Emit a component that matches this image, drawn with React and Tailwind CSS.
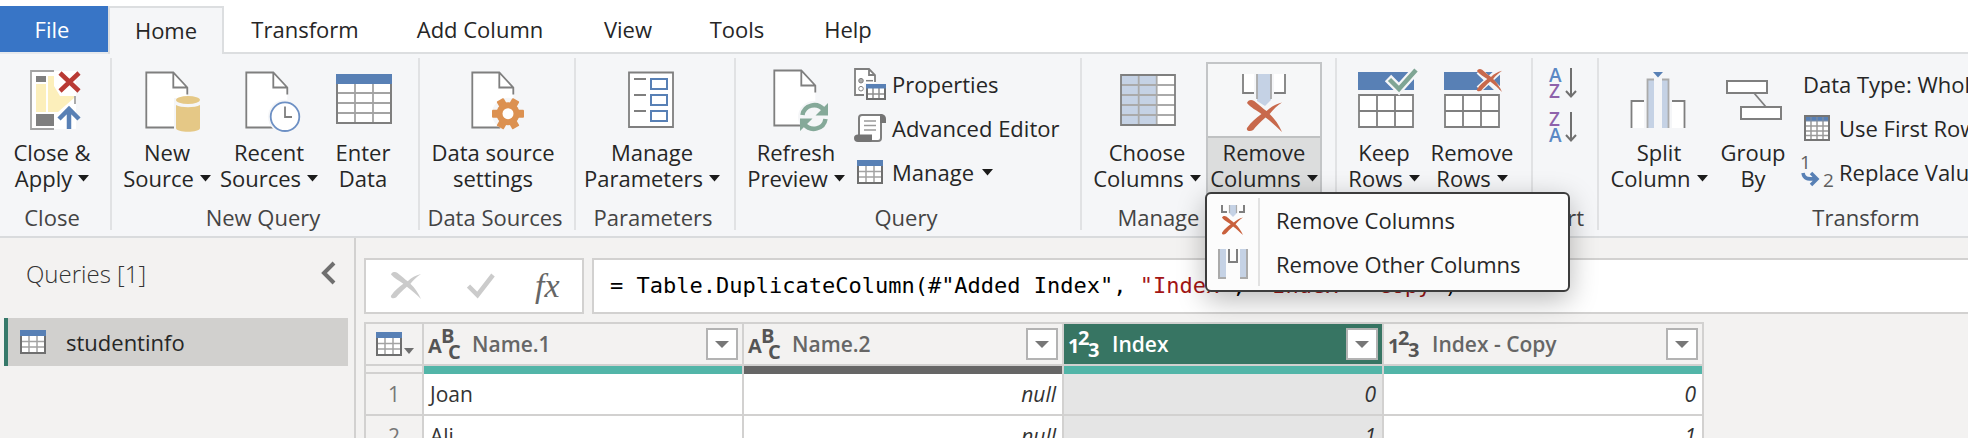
import React from "react";

const GRAY = "#7f7f7f";
const BLUE = "#5880b5";
const RED = "#c8694c";

function Caret() {
  return (
    <svg width="11" height="7" viewBox="0 0 11 7" className="inline-block shrink-0" aria-hidden="true">
      <path d="M0 0h11L5.500 6.500z" fill="#1b1b1b" />
    </svg>
  );
}

function BigIcon({ children }) {
  return (
    <svg width="68" height="66" viewBox="0 0 68 66" className="block overflow-visible" fill="none" aria-hidden="true">
      {children}
    </svg>
  );
}

function Brush({ x, y, w, h, color = RED }) {
  return (
    <svg x={x} y={y} width={w} height={h} viewBox="0 0 34 32" preserveAspectRatio="none" overflow="visible">
      <path
        d="M0 3C1 0 4-1 7 1C12 5 16 9 19 11C23 7 28 4 34 2.500C29 6 25 10 22 14C27 19 31 25 34 32C29 27 24 22 18 17.500C13 22 9 26 6 30C3 32-1 31 0 28C4 22 9 18 14 14C9 10 4 8 0 3Z"
        fill={color}
      />
    </svg>
  );
}

function Doc({ x, y }) {
  return (
    <g transform={`translate(${x} ${y})`} stroke={GRAY} strokeWidth="1.8">
      <path d="M0 0H27L41 15V55H0Z" fill="#fff" stroke="none" />
      <path d="M28 55H0V0H27L41 15V22M27 0V15H41" />
    </g>
  );
}

function CloseApplyIcon() {
  return (
    <BigIcon>
      <path d="M13 3H58V61H13Z" fill="#fff" />
      <path d="M36 3H13V61H36M57 28V36" stroke="#a3a3a3" strokeWidth="1.8" />
      <path d="M18 8H28V14H18ZM18 46H36V58H18Z" fill={GRAY} />
      <path d="M18 16H28V44H18ZM30 8H36V18L42 28H56V30L40 44H30Z" fill="#fcefbb" />
      <path d="M42 5L61 23M61 5L42 23" stroke="#b93a34" strokeWidth="4.500" />
      <path d="M51 61V40M41 51L51 41L61 51" stroke={BLUE} strokeWidth="4.500" />
    </BigIcon>
  );
}

function NewSourceIcon() {
  return (
    <BigIcon>
      <Doc x={13.3} y={4.5} />
      <path d="M41 30H69V66H41Z" fill="#f5f6f8" />
      <path d="M43 37V60C43 65 67 65 67 60V37C62 40 48 40 43 37Z" fill="#e5c886" />
      <ellipse cx="55" cy="32" rx="12" ry="4" fill="#e5c886" />
    </BigIcon>
  );
}

function RecentIcon() {
  return (
    <BigIcon>
      <Doc x={11.3} y={4.5} />
      <circle cx="50" cy="48.700" r="17" fill="#f5f6f8" />
      <circle cx="50" cy="48.700" r="14.300" fill="#fff" stroke="#6d90c4" strokeWidth="1.800" />
      <path d="M50 38.500V49H57" stroke={GRAY} strokeWidth="1.800" />
    </BigIcon>
  );
}

function EnterDataIcon() {
  return (
    <BigIcon>
      <path d="M8 7H62V55H8Z" fill="#fff" />
      <path d="M8 25H62M8 35H62M8 45H62M26 16V55M44 16V55" stroke="#a3a3a3" strokeWidth="1.800" />
      <path d="M8 7H62V55H8Z" stroke={GRAY} strokeWidth="2" />
      <path d="M7 6H63V16H7Z" fill={BLUE} />
    </BigIcon>
  );
}

function SettingsIcon() {
  return (
    <BigIcon>
      <Doc x={13.3} y={4.5} />
      <circle cx="49" cy="45.700" r="16" fill="#f5f6f8" />
      <g transform="translate(49 45.700)" fill="#dc9151">
        <rect x="-16" y="-4" width="32" height="8" rx="1" />
        <rect x="-16" y="-4" width="32" height="8" rx="1" transform="rotate(60)" />
        <rect x="-16" y="-4" width="32" height="8" rx="1" transform="rotate(120)" />
        <circle r="11.500" />
        <circle r="5.500" fill="#fff" />
      </g>
    </BigIcon>
  );
}

function ParametersIcon() {
  return (
    <BigIcon>
      <path d="M11 4.500H55V59H11Z" fill="#fff" stroke={GRAY} strokeWidth="1.800" />
      <path d="M16 11H28M16 27H28M16 43H28" stroke={GRAY} strokeWidth="1.800" />
      <path d="M33 11H49V21H33ZM33 27H49V37H33ZM33 43H49V53H33Z" stroke={BLUE} strokeWidth="2" />
    </BigIcon>
  );
}

function RefreshIcon() {
  return (
    <BigIcon>
      <Doc x={12.3} y={2.5} />
      <circle cx="52" cy="49" r="16" fill="#f5f6f8" />
      <g stroke="#85a999" strokeWidth="4.500">
        <path d="M40.500 47C42 37 55 33.500 62 42" />
        <path d="M63.500 51C62 61 49 64.500 42 56" />
      </g>
      <path d="M66 35V47.500H53.500ZM38 63V50.500H50.500Z" fill="#85a999" />
    </BigIcon>
  );
}

function ChooseColumnsIcon() {
  return (
    <BigIcon>
      <path d="M8 7H62V57H8Z" fill="#fff" />
      <path d="M8 7H43.700V57H8Z" fill="#c5d2e5" />
      <path d="M8 17H62M8 27H62M8 37H62M8 47H62M25.700 7V57M43.700 7V57" stroke="#aaa" strokeWidth="1.800" />
      <path d="M8 7H62V57H8Z" stroke={GRAY} strokeWidth="1.800" />
    </BigIcon>
  );
}

function RemoveColumnsIcon() {
  return (
    <BigIcon>
      <path d="M13 6H55V25H13Z" fill="#fff" />
      <path d="M24 6H44V30H24Z" fill="#f5f6f8" />
      <path d="M13 6V25H24M55 6V25H44" stroke={GRAY} strokeWidth="1.800" />
      <path d="M27 6H41V32L35 38L27 33Z" fill="#c5d2e5" />
      <path d="M27 6V31M41 6V31" stroke="#aaa" strokeWidth="1.800" />
      <Brush x={17} y={32} w={35} h={32} />
    </BigIcon>
  );
}

function RowsGrid({ x }) {
  return (
    <g transform={`translate(${x} 0)`}>
      <path d="M1 27H55V59H1Z" fill="#fff" />
      <path d="M1 27H55V59H1ZM1 43H55M19 27V59M37 27V59" stroke={GRAY} strokeWidth="1.800" />
      <path d="M0 4H56V22H0Z" fill={BLUE} />
    </g>
  );
}

function KeepRowsIcon() {
  return (
    <BigIcon>
      <RowsGrid x={8} />
      <path d="M38 10L49 21L67 1" stroke="#f5f6f8" strokeWidth="9" />
      <path d="M39.500 11.500L49 21L66 2" stroke="#7fa594" strokeWidth="4.500" />
    </BigIcon>
  );
}

function RemoveRowsIcon() {
  return (
    <BigIcon>
      <RowsGrid x={6} />
      <path d="M41 3L61 22M62 2L41 21" stroke="#f5f6f8" strokeWidth="7" />
      <Brush x={39} y={1} w={25} h={23} />
    </BigIcon>
  );
}

function SplitIcon() {
  return (
    <BigIcon>
      <path d="M7 33H19V60H7ZM47 33H60V60H47Z" fill="#fff" />
      <path d="M6.500 60V33H19M59.500 60V33H47" stroke={GRAY} strokeWidth="1.800" />
      <path d="M22 11H29V60H22ZM37 11H44V60H37Z" fill="#c5d2e5" />
      <path d="M22.500 60V11.500H29M43.500 60V11.500H37" stroke="#aaa" strokeWidth="1.800" />
      <path d="M28 4H38L33 9.500Z" fill={BLUE} />
    </BigIcon>
  );
}

function GroupIcon() {
  return (
    <BigIcon>
      <path d="M35 25L47 39" stroke={GRAY} strokeWidth="1.800" />
      <path d="M8 13H48V25H8ZM22 39H62V51H22Z" fill="#fff" stroke={GRAY} strokeWidth="2" />
    </BigIcon>
  );
}

function TableIcon() {
  return (
    <svg width="26" height="24" viewBox="0 0 26 24" fill="none" className="block shrink-0" aria-hidden="true">
      <path d="M1 1H25V23H1Z" fill="#fff" />
      <path d="M1 11.500H25M1 17H25M9 5V23M17 5V23" stroke="#a3a3a3" strokeWidth="1.500" />
      <path d="M1 1H25V23H1Z" stroke="#6f6f6f" strokeWidth="2" />
      <path d="M0 0H26V6H0Z" fill={BLUE} />
    </svg>
  );
}

function PropertiesIcon() {
  return (
    <svg width="36" height="36" viewBox="0 0 36 36" fill="none" aria-hidden="true">
      <path d="M3 3H18L24 9V29H3Z" fill="#fff" />
      <path d="M12 29H3V3H17L23 9V16M17 3V9H23" stroke={GRAY} strokeWidth="1.800" />
      <circle cx="9" cy="14.700" r="2.300" fill="#aaa" stroke={GRAY} />
      <circle cx="9" cy="22.700" r="2.300" stroke={GRAY} />
      <path d="M14 14.700H21" stroke={GRAY} strokeWidth="1.500" />
      <path d="M12 17H34V34H12Z" fill="#f5f6f8" />
      <path d="M14 18H34V34H14Z" fill="#fff" />
      <path d="M15 28H33M21 22V33M27 22V33" stroke="#8f8f8f" strokeWidth="1.500" />
      <path d="M15 19H33V33H15Z" stroke="#6f6f6f" strokeWidth="2" />
      <path d="M14 18H34V22.500H14Z" fill={BLUE} />
    </svg>
  );
}

function EditorIcon() {
  return (
    <svg width="36" height="36" viewBox="0 0 36 36" fill="none" aria-hidden="true">
      <path d="M7 5H28V31H7Z" fill="#fff" />
      <path d="M7 25V8Q7 5 10 5H30M29 8V28Q29 31 26 31H18" stroke={GRAY} strokeWidth="2" />
      <path d="M28 4H30Q34 5 34 9V13H28ZM2 28Q2 24.500 6 24.500H20V31L18 32H6Q2 32 2 28Z" fill="#747474" />
      <path d="M12 11H24M12 15.500H24M12 20H24" stroke="#9a9a9a" strokeWidth="1.600" />
    </svg>
  );
}

function HeaderRowIcon() {
  return (
    <svg width="26" height="26" viewBox="0 0 26 26" fill="none" aria-hidden="true">
      <path d="M1 1H25V25H1Z" fill="#fff" />
      <path d="M1 1H25V6H1Z" fill={BLUE} />
      <path d="M1 11H25M1 16H25M1 20.500H25M7 6V25M13 6V25M19 6V25" stroke="#9a9a9a" strokeWidth="1.500" />
      <path d="M7 1V6M13 1V6M19 1V6M1 6H25" stroke="#7f8da3" strokeWidth="1.200" />
      <path d="M1 1H25V25H1Z" stroke="#757575" strokeWidth="2" />
    </svg>
  );
}

function ReplaceIcon() {
  return (
    <svg width="34" height="36" viewBox="0 0 34 36" fill="none" className="overflow-visible font-['Open_Sans']" aria-hidden="true">
      <text x="0" y="15" fontSize="19" fill="#5f5f5f">1</text>
      <text x="23" y="33" fontSize="19" fill="#5f5f5f">2</text>
      <path d="M3 19C4 25 7 25 16 25M11 19L17 25L11 31" stroke={BLUE} strokeWidth="3.500" />
    </svg>
  );
}

function SortIcon({ first, second, firstColor, secondColor }) {
  return (
    <svg width="28" height="32" viewBox="0 0 28 32" fill="none" className="block overflow-visible font-['Open_Sans'] font-semibold" aria-hidden="true">
      <text x="0" y="14" fontSize="19" fill={firstColor}>{first}</text>
      <text x="0" y="30" fontSize="19" fill={secondColor}>{second}</text>
      <path d="M22 0V28M17 23L22 28.500L27 23" stroke="#707070" strokeWidth="2" />
    </svg>
  );
}

function MenuRemoveIcon() {
  return (
    <svg width="32" height="32" viewBox="0 0 32 32" fill="none" aria-hidden="true">
      <path d="M5 1V8H10M27 1V8H22" stroke={GRAY} strokeWidth="2" />
      <path d="M12 1H20V9L16 13L12 9Z" fill="#c5d2e5" />
      <path d="M12.500 1V9M19.500 1V9" stroke="#aaa" strokeWidth="1.200" />
      <Brush x={5} y={12} w={21} h={19} color="#c9603c" />
    </svg>
  );
}

function MenuOtherIcon() {
  return (
    <svg width="32" height="32" viewBox="0 0 32 32" fill="none" aria-hidden="true">
      <path d="M1 1H9V31H1ZM23 1H31V31H23Z" fill="#c5d2e5" />
      <path d="M2 1V30H9M30 1V30H23" stroke="#aaa" strokeWidth="2" />
      <path d="M12 1V14H20V1" stroke={GRAY} strokeWidth="2" />
    </svg>
  );
}

function TypeIcon({ kind, light }) {
  const fill = light ? "#ffffff" : "#555555";
  const glyphs = kind === "text" ? ["A", "B", "C"] : ["1", "2", "3"];
  const spots = kind === "text" ? [[0, 27], [13, 17], [20, 33]] : [[0, 27], [10, 19], [20, 31]];
  return (
    <svg width="36" height="36" viewBox="0 0 36 36" className="block shrink-0 overflow-visible font-['Open_Sans'] font-bold" aria-hidden="true">
      {glyphs.map((g, i) => (
        <text key={g} x={spots[i][0]} y={spots[i][1]} fontSize="20" fill={fill}>{g}</text>
      ))}
    </svg>
  );
}

function Group({ label, className, children }) {
  return (
    <section className={`flex shrink-0 border-r-2 border-[#e1e2e4] ${className}`}>
      <div className="flex grow flex-col">
        <div className="flex h-[146px] items-start">{children}</div>
        <h2 className="text-center leading-[26px] text-[#444]">{label}</h2>
      </div>
    </section>
  );
}

function BigButton({ icon, top, bottom, caret, className }) {
  return (
    <button type="button" className={`flex shrink-0 flex-col items-center pt-[10px] ${className}`}>
      {icon}
      <span className="mt-[5px] whitespace-nowrap">{top}</span>
      <span className="flex items-center gap-[6px] whitespace-nowrap">
        {bottom}
        {caret && <Caret />}
      </span>
    </button>
  );
}

function SmallButton({ icon, label, caret }) {
  return (
    <button type="button" className="flex h-11 items-center gap-1 whitespace-nowrap">
      {icon && <span className="flex w-9 justify-center">{icon}</span>}
      <span>{label}</span>
      {caret && <span className="ml-1 flex"><Caret /></span>}
    </button>
  );
}

const tabs = [
  ["Transform", "w-[162px]"],
  ["Add Column", "w-[188px]"],
  ["View", "w-[108px]"],
  ["Tools", "w-[110px]"],
  ["Help", "w-[112px]"],
];

function Ribbon() {
  return (
    <header>
      <nav className="flex bg-white pt-[6px]">
        <a href="#file" className="w-[108px] border-b-2 border-[#e6e9ed] bg-[#3875c6] pr-1 text-center leading-[46px] text-white">File</a>
        <a href="#home" className="w-[116px] border-x-2 border-t-2 border-[#dcdee0] bg-[#f5f6f8] text-center leading-[44px]">Home</a>
        <div className="flex grow border-b-2 border-[#dcdee0]">
          {tabs.map(([name, width]) => (
            <a key={name} href={`#${name}`} className={`text-center leading-[46px] whitespace-nowrap ${width}`}>{name}</a>
          ))}
        </div>
      </nav>

      <div className="flex border-b-2 border-[#d9dbdd] bg-[#f5f6f8] pt-1 pb-[6px]">
        <Group label="Close" className="w-[112px] pr-[6px]">
          <BigButton icon={<CloseApplyIcon />} top="Close &" bottom="Apply" caret className="w-[104px]" />
        </Group>
        <Group label="New Query" className="w-[308px] pr-1">
          <BigButton icon={<NewSourceIcon />} top="New" bottom="Source" caret className="ml-1 w-[102px]" />
          <BigButton icon={<RecentIcon />} top="Recent" bottom="Sources" caret className="w-[102px]" />
          <BigButton icon={<EnterDataIcon />} top="Enter" bottom="Data" className="w-[86px]" />
        </Group>
        <Group label="Data Sources" className="w-[156px] pr-1">
          <BigButton icon={<SettingsIcon />} top="Data source" bottom="settings" className="w-[146px]" />
        </Group>
        <Group label="Parameters" className="w-[160px] pr-1">
          <BigButton icon={<ParametersIcon />} top="Manage" bottom="Parameters" caret className="w-[152px]" />
        </Group>
        <Group label="Query" className="w-[346px] pr-1">
          <BigButton icon={<RefreshIcon />} top="Refresh" bottom="Preview" caret className="ml-1 w-[112px]" />
          <div className="flex flex-col pt-1">
            <SmallButton icon={<PropertiesIcon />} label="Properties" />
            <SmallButton icon={<EditorIcon />} label="Advanced Editor" />
            <SmallButton icon={<TableIcon />} label="Manage" caret />
          </div>
        </Group>
        <Group label="Manage Columns" className="w-[255px] pr-1">
          <BigButton icon={<ChooseColumnsIcon />} top="Choose" bottom="Columns" caret className="ml-[6px] w-[118px]" />
          <RemoveColumnsMenu />
        </Group>
        <Group label="Reduce Rows" className="w-[196px] pr-1">
          <BigButton icon={<KeepRowsIcon />} top="Keep" bottom="Rows" caret className="ml-[3px] w-[88px]" />
          <BigButton icon={<RemoveRowsIcon />} top="Remove" bottom="Rows" caret className="w-[88px]" />
        </Group>
        <Group label="Sort" className="w-[66px] pr-1">
          <div className="flex flex-col gap-3 pt-[10px] pl-4">
            <button type="button" aria-label="Sort ascending">
              <SortIcon first="A" second="Z" firstColor="#5b88c4" secondColor="#8e62ab" />
            </button>
            <button type="button" aria-label="Sort descending">
              <SortIcon first="Z" second="A" firstColor="#8e62ab" secondColor="#5b88c4" />
            </button>
          </div>
        </Group>
        <Group label="Transform" className="w-[540px] pr-1">
          <BigButton icon={<SplitIcon />} top="Split" bottom="Column" caret className="ml-1 w-[112px]" />
          <BigButton icon={<GroupIcon />} top="Group" bottom="By" className="w-[76px]" />
          <div className="flex flex-col pt-1 pl-2">
            <span className="pl-1">
              <SmallButton label="Data Type: Whole Number" caret />
            </span>
            <SmallButton icon={<HeaderRowIcon />} label="Use First Row as Headers" caret />
            <SmallButton icon={<ReplaceIcon />} label="Replace Values" />
          </div>
        </Group>
      </div>
    </header>
  );
}

function RemoveColumnsMenu() {
  return (
    <div className="relative mt-1 w-[116px] shrink-0">
      <button
        type="button"
        aria-expanded="true"
        className="flex h-[132px] w-full flex-col items-center border-2 border-[#c3c5c7] bg-[#f6f7f8]"
      >
        <span className="flex h-[72px] pt-1"><RemoveColumnsIcon /></span>
        <span className="w-full grow border-t-2 border-[#bfc1c2] bg-[#dcdddd]">
          <span className="block pt-px">Remove</span>
          <span className="flex items-center justify-center gap-[6px]">
            Columns
            <Caret />
          </span>
        </span>
      </button>
      <ul
        role="menu"
        className="absolute top-[130px] -left-px z-10 w-[365px] rounded-md border-2 border-[#3c3c3c] bg-[#fcfcfc] py-1 shadow-[0_8px_28px_rgba(0,0,0,0.28)]"
      >
        <li role="none">
          <button type="button" role="menuitem" className="flex h-[44px] w-full items-center">
            <span className="flex h-full w-[53px] items-center justify-center border-r-2 border-[#e2e2e2]"><MenuRemoveIcon /></span>
            <span className="pl-4">Remove Columns</span>
          </button>
        </li>
        <li role="none">
          <button type="button" role="menuitem" className="flex h-[44px] w-full items-center">
            <span className="flex h-full w-[53px] items-center justify-center border-r-2 border-[#e2e2e2]"><MenuOtherIcon /></span>
            <span className="pl-4">Remove Other Columns</span>
          </button>
        </li>
      </ul>
    </div>
  );
}

function QueriesPane() {
  return (
    <aside className="w-[356px] shrink-0 border-r-2 border-[#d2d1d0]">
      <div className="flex h-[80px] items-start justify-between pt-[18px] pr-[18px] pl-[26px]">
        <h2 className="text-[24px] leading-[36px] font-light text-[#333]">Queries [1]</h2>
        <button type="button" aria-label="Collapse pane" className="pt-[5px]">
          <svg width="16" height="24" viewBox="0 0 16 24" fill="none" className="block" aria-hidden="true">
            <path d="M14 2L4 12L14 22" stroke="#6f6f6f" strokeWidth="4" />
          </svg>
        </button>
      </div>
      <a href="#studentinfo" className="mr-[6px] ml-1 flex h-12 items-center gap-5 border-l-4 border-[#36796a] bg-[#d1d0ce] pl-3">
        <TableIcon />
        studentinfo
      </a>
    </aside>
  );
}

function FormulaBar() {
  return (
    <div className="flex h-[56px] gap-2 pl-2">
      <div className="flex w-[220px] shrink-0 items-center border-2 border-[#d2d1d0] bg-white pl-6">
        <button type="button" aria-label="Cancel" className="w-[77px]">
          <svg width="32" height="28" viewBox="0 0 32 28" className="block" aria-hidden="true">
            <Brush x={1} y={0} w={30} h={27} color="#cbcbcb" />
          </svg>
        </button>
        <button type="button" aria-label="Accept" className="w-[68px]">
          <svg width="28" height="26" viewBox="0 0 28 26" fill="none" className="block" aria-hidden="true">
            <path d="M1.500 13L10.500 22L26 2" stroke="#cbcbcb" strokeWidth="4.500" />
          </svg>
        </button>
        <button type="button" aria-label="Insert function" className="font-['Liberation_Serif'] text-[34px] leading-[40px] text-[#666] italic">fx</button>
      </div>
      <div
        role="textbox"
        aria-label="Formula"
        className="flex grow items-center overflow-hidden border-2 border-r-0 border-[#d2d1d0] bg-white pl-4 whitespace-pre text-black"
      >
        <code className="font-['DejaVu_Sans_Mono']">
          {'= Table.DuplicateColumn(#"Added Index", '}
          <span className="text-[#a31515]">"Index"</span>
          {", "}
          <span className="text-[#a31515]">"Index - Copy"</span>)
        </code>
      </div>
    </div>
  );
}

const columns = [
  { name: "Name.1", kind: "text", bar: "bg-[#52b5a8]" },
  { name: "Name.2", kind: "text", bar: "bg-[#666666]" },
  { name: "Index", kind: "number", bar: "bg-[#52b5a8]", selected: true },
  { name: "Index - Copy", kind: "number", bar: "bg-[#52b5a8]" },
];

const rows = [
  ["Joan", "null", "0", "0"],
  ["Ali", "null", "1", "1"],
];

function DataTable() {
  return (
    <table className="mt-2 ml-2 w-[1340px] table-fixed border-separate border-spacing-0 border-t-2 border-l-2 border-[#d2d1d0] text-[21px]">
      <thead>
        <tr className="h-[42px]">
          <th className="w-[58px] border-r-2 border-b-2 border-[#d2d1d0] p-0">
            <button type="button" aria-label="Table options" className="flex items-end gap-[2px] pl-[10px]">
              <TableIcon />
              <svg width="10" height="6" viewBox="0 0 10 6" className="mb-[2px]" aria-hidden="true">
                <path d="M0 0h10L5 6z" fill="#6f6f6f" />
              </svg>
            </button>
          </th>
          {columns.map((c) => (
            <th
              key={c.name}
              scope="col"
              className={`border-r-2 border-b-2 border-[#d2d1d0] p-0 text-left ${c.selected ? "bg-[#377563] text-white" : "text-[#666]"}`}
            >
              <div className="flex items-center pr-[4px] pl-[4px]">
                <TypeIcon kind={c.kind} light={c.selected} />
                <span className="grow pl-2 font-semibold">{c.name}</span>
                <button type="button" aria-label={`Filter ${c.name}`} className="flex size-8 items-center justify-center border-2 border-[#b3b3b3] bg-white">
                  <svg width="14" height="7" viewBox="0 0 14 7" aria-hidden="true">
                    <path d="M0 0h14L7 7z" fill="#777" />
                  </svg>
                </button>
              </div>
            </th>
          ))}
        </tr>
        <tr className="h-2">
          <td className="border-r-2 border-b-2 border-[#d2d1d0] p-0" />
          {columns.map((c) => (
            <td key={c.name} className={`border-r-2 border-[#d2d1d0] p-0 ${c.bar}`} />
          ))}
        </tr>
      </thead>
      <tbody>
        {rows.map((row, r) => (
          <tr key={row[0]} className="h-[42px] text-[#333]">
            <th scope="row" className="border-r-2 border-b-2 border-[#d2d1d0] p-0 font-normal text-[#777]">{r + 1}</th>
            {row.map((value, i) => (
              <td
                key={columns[i].name}
                className={`border-r-2 border-b-2 border-[#d2d1d0] px-[6px] py-0 ${i > 0 ? "text-right italic" : ""} ${columns[i].selected ? "bg-[#e5e5e5]" : "bg-white"}`}
              >
                {value}
              </td>
            ))}
          </tr>
        ))}
      </tbody>
    </table>
  );
}

export default function App() {
  return (
    <div className="flex h-screen flex-col overflow-hidden bg-[#f3f2f1] font-['Open_Sans',sans-serif] text-[22px] leading-[26px] text-[#262626]">
      <Ribbon />
      <div className="flex min-h-0 grow">
        <QueriesPane />
        <main className="min-w-0 grow overflow-hidden pt-5">
          <FormulaBar />
          <DataTable />
        </main>
      </div>
    </div>
  );
}
